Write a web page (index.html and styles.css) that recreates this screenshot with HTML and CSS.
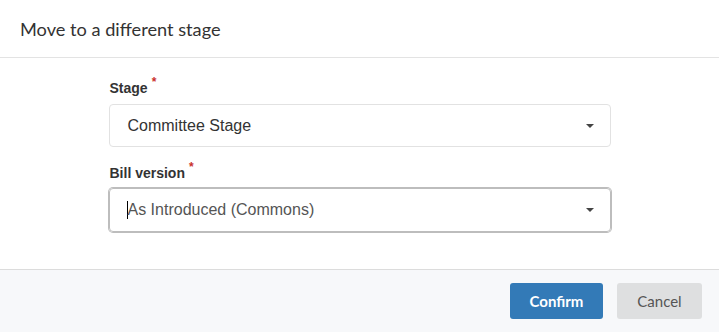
FILE: index.html
```html
<!DOCTYPE html>
<html>
<head>
<meta charset="utf-8">
<link rel="stylesheet" href="styles.css">
</head>
<body>
<div class="modal">
  <div class="modal-header">
    <h1 class="modal-title">Move to a different stage</h1>
  </div>
  <div class="modal-body">
    <div class="form">
      <label class="field-label">Stage<span class="req">*</span></label>
      <div class="select">
        <span class="select-value">Committee Stage</span>
        <span class="caret"></span>
      </div>
      <label class="field-label second">Bill version<span class="req">*</span></label>
      <div class="select focused">
        <span class="select-value muted"><span class="cursor"></span>As Introduced (Commons)</span>
        <span class="caret"></span>
      </div>
    </div>
  </div>
  <div class="modal-footer">
    <button class="btn btn-primary">Confirm</button>
    <button class="btn btn-default">Cancel</button>
  </div>
</div>
</body>
</html>
```
FILE: styles.css
```css
html, body {
  margin: 0;
  padding: 0;
  background: #fff;
}
.modal {
  width: 719px;
  height: 332px;
  display: flex;
  flex-direction: column;
}
.modal-header {
  height: 57px;
  border-bottom: 1px solid #e3e3e3;
  display: flex;
  align-items: center;
  padding-left: 20px;
  box-sizing: content-box;
}
.modal-title {
  margin: 0;
  font-family: Lato, "Liberation Sans", sans-serif;
  font-weight: 400;
  font-size: 18.2px;
  color: #333;
}
.modal-body {
  height: 211px;
  border-bottom: 1px solid #dcdcdc;
  display: flex;
  justify-content: center;
}
.form {
  width: 502px;
  padding-top: 20px;
  display: flex;
  flex-direction: column;
}
.field-label {
  font-family: "Liberation Sans", Arial, sans-serif;
  font-weight: 700;
  font-size: 14px;
  line-height: 20px;
  color: #333;
  padding-left: 1px;
  margin-bottom: 5px;
}
.field-label.second {
  margin-top: 16px;
  margin-bottom: 4px;
}
.req {
  color: #c9302c;
  font-size: 12px;
  position: relative;
  top: -7px;
  margin-left: 4px;
}
.select {
  height: 43px;
  box-sizing: border-box;
  border: 1px solid #e2e2e2;
  border-radius: 4px;
  display: flex;
  align-items: center;
  padding-left: 18px;
  padding-right: 16px;
}
.select.focused {
  height: 44px;
  border-color: #bdbdbd;
  box-shadow: 0 0 0 1px #bdbdbd;
}
.select-value {
  flex: 1;
  font-family: "Liberation Sans", Arial, sans-serif;
  font-size: 16px;
  color: #333;
  display: flex;
  align-items: center;
}
.select-value.muted {
  color: #555;
}
.cursor {
  display: inline-block;
  width: 1px;
  height: 18px;
  background: #000;
  margin-left: -1px;
}
.caret {
  width: 0;
  height: 0;
  border-left: 4px solid transparent;
  border-right: 4px solid transparent;
  border-top: 4px solid #444;
}
.modal-footer {
  flex: 1;
  background: #f7f8fa;
  display: flex;
  justify-content: flex-end;
  align-items: center;
  gap: 14px;
  padding-right: 17px;
}
.btn {
  height: 36px;
  border: none;
  border-radius: 3px;
  font-family: Lato, "Liberation Sans", sans-serif;
  font-size: 15px;
  padding: 0;
  cursor: pointer;
}
.btn-primary {
  width: 93px;
  background: #337ab7;
  color: #fff;
  font-weight: 700;
}
.btn-default {
  width: 85px;
  background: #dedfe0;
  color: #555;
  font-weight: 400;
}
```
